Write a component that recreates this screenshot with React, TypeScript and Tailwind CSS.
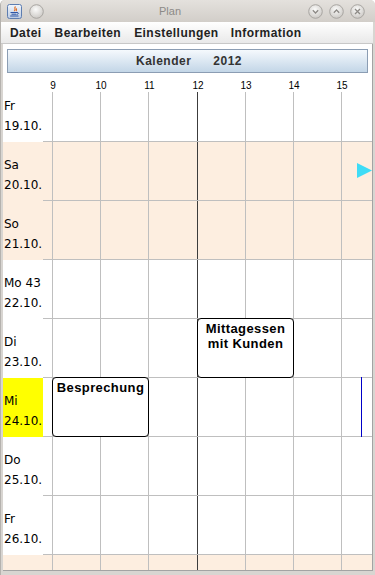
import React from 'react';

type Day = { name: string; date: string; weekend?: boolean; today?: boolean };

const days: Day[] = [
  { name: 'Fr', date: '19.10.' },
  { name: 'Sa', date: '20.10.', weekend: true },
  { name: 'So', date: '21.10.', weekend: true },
  { name: 'Mo 43', date: '22.10.' },
  { name: 'Di', date: '23.10.' },
  { name: 'Mi', date: '24.10.', today: true },
  { name: 'Do', date: '25.10.' },
  { name: 'Fr', date: '26.10.' },
  // partly visible weekend row at the bottom, label scrolled out of view
  { name: '', date: '', weekend: true },
];

const hours = ['9', '10', '11', '12', '13', '14', '15'];

const sans = { fontFamily: '"Liberation Sans", Arial, sans-serif' };
const deja = { fontFamily: '"DejaVu Sans", Verdana, sans-serif' };

const RoundButton: React.FC<{ kind?: 'down' | 'up' | 'close' }> = ({ kind }) => (
  <svg width="15" height="15" viewBox="0 0 15 15">
    <defs>
      <radialGradient id={`rb-${kind ?? 'none'}`} cx="0.45" cy="0.35" r="0.7">
        <stop offset="0" stopColor="#fbfbfa" />
        <stop offset="1" stopColor="#c9c6c2" />
      </radialGradient>
    </defs>
    <circle cx="7.5" cy="7.5" r="6.8" fill={`url(#rb-${kind ?? 'none'})`} stroke="#a9a6a2" />
    {kind === 'down' && <path d="M4.8 6.3 L7.5 9 L10.2 6.3" fill="none" stroke="#8d8a86" strokeWidth="1.3" />}
    {kind === 'up' && <path d="M4.8 8.7 L7.5 6 L10.2 8.7" fill="none" stroke="#8d8a86" strokeWidth="1.3" />}
    {kind === 'close' && <path d="M5 5 L10 10 M10 5 L5 10" fill="none" stroke="#8d8a86" strokeWidth="1.3" />}
  </svg>
);

const JavaIcon = () => (
  <svg width="15" height="15" viewBox="0 0 15 15">
    <defs>
      <linearGradient id="jv" x1="0" y1="0" x2="0" y2="1">
        <stop offset="0" stopColor="#f2f6fc" />
        <stop offset="1" stopColor="#bccbe2" />
      </linearGradient>
    </defs>
    <rect x="0.5" y="0.5" width="14" height="14" rx="2" fill="url(#jv)" stroke="#5d7db0" />
    <path d="M8.5 2.5 C6.5 4.5 9.5 5 7.2 7.2 M9.8 4.5 C8.8 5.5 10 6 9 7" fill="none" stroke="#e26a1c" strokeWidth="1.1" />
    <path d="M3.5 8.5 H10 M4.5 10.2 H9 M3.2 12 H11.5 M10 8.5 C12 8.5 12 10.2 9.5 10.4" fill="none" stroke="#2f56a6" strokeWidth="1" />
  </svg>
);

const cellWidths = ['w-[48px]', 'w-[48px]', 'w-[49px]', 'w-[48px]', 'w-[48px]', 'w-[48px]'];
const labelWidths = ['w-[48px]', 'w-[48px]', 'w-[49px]', 'w-[48px]', 'w-[48px]', 'w-[48px]', 'w-[48px]'];

const GridCells: React.FC = () => (
  <>
    <div className="w-[9px] shrink-0" />
    {cellWidths.map((w, i) => (
      <div
        key={i}
        className={`${w} shrink-0 border-l ${i === 3 ? 'border-[#3c3c3c]' : 'border-[#bfbfbf]'}`}
      />
    ))}
    <div className="flex-1 border-l border-[#bfbfbf]" />
  </>
);

const EventBox: React.FC<{ left: string; children: React.ReactNode }> = ({ left, children }) => (
  <div
    className={`absolute ${left} -top-px w-[97px] h-[60px] border border-black rounded-[4px] bg-white text-center text-[13px] font-bold leading-[15px] tracking-[0.4px] text-black pt-[2px]`}
    style={sans}
  >
    {children}
  </div>
);

export default function App() {
  return (
    <div className="w-[375px] h-[575px] bg-[#d8d5d1] flex flex-col overflow-hidden rounded-t-[5px] border-l border-[#b5b2ae]">
      {/* Title bar */}
      <div className="h-[22px] shrink-0 flex items-center bg-gradient-to-b from-[#e4e1dd] to-[#d2cec9] pl-[6px] pr-[10px]">
        <JavaIcon />
        <div className="ml-[7px]">
          <RoundButton />
        </div>
        <div className="flex-1 text-center text-[11px] text-[#8c8a87] pr-[12px]" style={sans}>
          Plan
        </div>
        <div className="flex gap-[6px]">
          <RoundButton kind="down" />
          <RoundButton kind="up" />
          <RoundButton kind="close" />
        </div>
      </div>

      {/* Menu bar */}
      <div
        className="h-[22px] shrink-0 mr-[2px] flex items-center gap-[12px] pl-[9px] bg-gradient-to-b from-[#ffffff] to-[#e9e9e9] border-b border-[#c8c8c8] text-[12px] font-bold tracking-[0.45px] text-[#222]"
        style={sans}
      >
        <span>Datei</span>
        <span className="ml-[1px]">Bearbeiten</span>
        <span className="ml-[1px]">Einstellungen</span>
        <span>Information</span>
      </div>

      {/* Content */}
      <div className="h-[527px] shrink-0 ml-[2px] w-[370px] border-r border-b border-[#a3a3a3] bg-white overflow-hidden flex flex-col">
        <div className="h-[5px] shrink-0" />
        <div
          className="mx-[4px] h-[24px] shrink-0 flex items-center justify-center border border-[#8b9db3] bg-gradient-to-b from-[#f5f9fd] to-[#c3d6e7] text-[12px] font-bold tracking-[0.5px] text-[#333]"
          style={sans}
        >
          <span className="pl-[3px]">Kalender</span>
          <span className="ml-[22px]">2012</span>
        </div>

        {/* hour labels */}
        <div className="h-[19px] shrink-0 flex pt-[8px] text-[10px] leading-[10px] text-black" style={sans}>
          <div className="w-[26px] shrink-0" />
          {hours.map((h, i) => (
            <div key={h} className={`${labelWidths[i]} shrink-0 text-center`}>
              {h}
            </div>
          ))}
        </div>

        {/* day rows */}
        {days.map((day, idx) => {
          const rowBg = day.weekend ? 'bg-[#fdeee0]' : 'bg-white';
          const labelBg = day.today ? 'bg-[#ffff00]' : rowBg;
          return (
            <div key={idx} className={`flex shrink-0 ${idx === 0 ? 'h-[50px]' : 'h-[59px]'} ${rowBg}`}>
              <div
                className={`w-[40px] shrink-0 pl-[1px] ${idx === 0 ? 'pt-[4px]' : 'pt-[13px]'} text-[12px] leading-[20px] text-black whitespace-nowrap ${labelBg}`}
                style={deja}
              >
                {day.name && <div>{day.name}</div>}
                {day.date && <div>{day.date}</div>}
              </div>
              <div className="relative flex flex-1 border-b border-[#bfbfbf]">
                <GridCells />
                {day.date === '20.10.' && (
                  <svg className="absolute left-[314px] top-[21px]" width="15" height="15" viewBox="0 0 15 15">
                    <polygon points="0,0 15,7.5 0,15" fill="#3fdcf6" />
                  </svg>
                )}
                {day.name === 'Di' && (
                  <EventBox left="left-[154px]">
                    Mittagessen
                    <br />
                    mit Kunden
                  </EventBox>
                )}
                {day.today && (
                  <>
                    <EventBox left="left-[9px]">Besprechung</EventBox>
                    <div className="absolute left-[318px] -top-px w-px h-[60px] bg-[#0000c8]" />
                  </>
                )}
              </div>
            </div>
          );
        })}
      </div>
    </div>
  );
}
